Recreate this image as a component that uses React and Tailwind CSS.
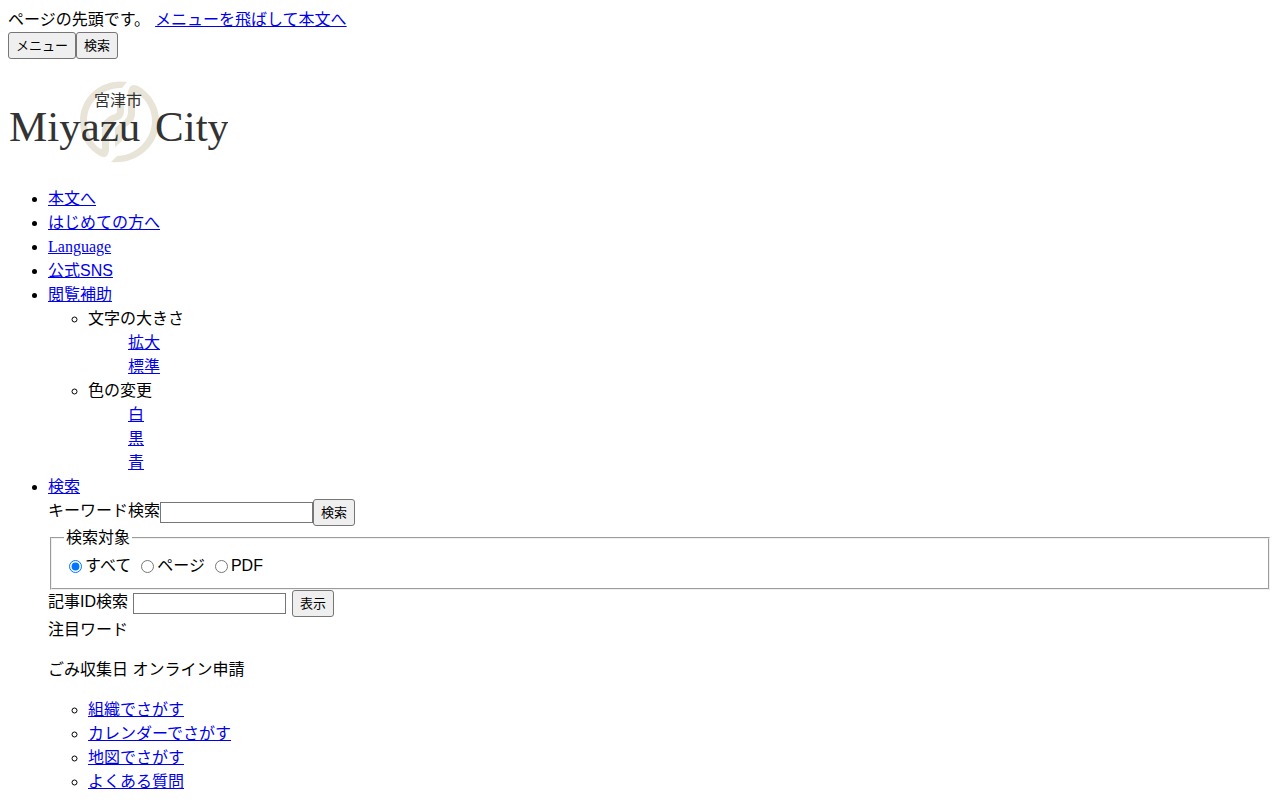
// src/App.jsx
import React, { useState } from 'react';

const TOOL_LINKS = ['本文へ', 'はじめての方へ', 'Language', '公式SNS'];

const ASSIST_GROUPS = [
  { title: '文字の大きさ', options: ['拡大', '標準'] },
  { title: '色の変更', options: ['白', '黒', '青'] },
];

const SEARCH_TARGETS = ['すべて', 'ページ', 'PDF'];

const FIND_LINKS = ['組織でさがす', 'カレンダーでさがす', '地図でさがす', 'よくある質問'];

const TextLink = ({ children }) => (
  <a
    href="#"
    className={
      children === 'Language'
        ? "text-[#0000ee] underline font-['Liberation_Serif',serif]"
        : 'text-[#0000ee] underline'
    }
  >
    {children}
  </a>
);

const Button = ({ children, type = 'button' }) => (
  <button
    type={type}
    className="h-[27px] px-[7px] text-[13px] leading-5 text-black bg-[#efefef] border border-[#767676] rounded-[3px]"
  >
    {children}
  </button>
);

const Logo = () => (
  <svg width="220" height="100" viewBox="0 0 220 100" role="img" aria-label="宮津市 Miyazu City">
    <g fill="#e8e4d8">
      <path d="M119 11 C95 7 72 25 72 50 C72 67 80 78 92 85 Q100 89 101 79 V58 Q101 52 107 50 Q116 48 116 41 V29 H109 V40 Q109 43 104 44 Q94 48 94 58 V77 Q94 79 91 77 C83 71 79 61 79 50 C79 30 96 16 114 17 Z" />
      <path d="M103 91 C128 94 151 75 151 50 C151 34 142 22 130 15 Q121 11 120 22 V42 Q120 47 114 51 L107 57 V76 L114 70 V59 L123 52 Q127 48 127 43 V24 Q127 21 130 23 C139 29 144 39 144 50 C144 69 127 85 109 85 Z" />
    </g>
    <g fill="#333333">
      <text x="86" y="35" className="text-[16px] font-['Noto_Sans_CJK_JP',sans-serif]">宮津市</text>
      <text x="1" y="70" className="text-[43px] font-['Liberation_Serif',serif]">Miyazu</text>
      <text x="147" y="70" className="text-[43px] font-['Liberation_Serif',serif]">City</text>
    </g>
  </svg>
);

const SearchPanel = () => {
  const [keyword, setKeyword] = useState('');
  const [articleId, setArticleId] = useState('');
  const [target, setTarget] = useState('すべて');

  return (
    <div>
      <form className="flex items-start" onSubmit={(e) => e.preventDefault()}>
        <label htmlFor="keyword">キーワード検索</label>
        <input
          id="keyword"
          type="text"
          value={keyword}
          onChange={(e) => setKeyword(e.target.value)}
          className="w-[153px] h-[21px] mt-[3px] px-0.5 text-[13px] bg-white border border-[#767676]"
        />
        <Button type="submit">検索</Button>
      </form>

      <fieldset className="mx-0.5 px-3 pb-[10px] border-2 [border-style:groove] border-[#f0f0f0]">
        <legend className="px-0.5">検索対象</legend>
        <div className="flex gap-[10px] pt-1 pl-[5px]">
          {SEARCH_TARGETS.map((name) => (
            <label key={name} className="flex items-center gap-[3px]">
              <input
                type="radio"
                name="target"
                checked={target === name}
                onChange={() => setTarget(name)}
                className="w-[13px] h-[13px]"
              />
              {name}
            </label>
          ))}
        </div>
      </fieldset>

      <form className="flex items-start pb-px" onSubmit={(e) => e.preventDefault()}>
        <label htmlFor="article-id" className="mr-[5px]">記事ID検索</label>
        <input
          id="article-id"
          type="text"
          value={articleId}
          onChange={(e) => setArticleId(e.target.value)}
          className="w-[153px] h-[21px] mt-[3px] mr-1.5 px-0.5 text-[13px] bg-white border border-[#767676]"
        />
        <Button type="submit">表示</Button>
      </form>

      <p>注目ワード</p>
      <p className="my-4">ごみ収集日 オンライン申請</p>

      <ul className="pl-10 list-[circle]">
        {FIND_LINKS.map((name) => (
          <li key={name}><TextLink>{name}</TextLink></li>
        ))}
      </ul>
    </div>
  );
};

const App = () => {
  return (
    <div className="p-2 bg-white text-black text-[16px] leading-6 font-['Liberation_Sans','Noto_Sans_CJK_JP',sans-serif]">
      {/* Skip link */}
      <p className="flex gap-[5px]">
        <span>ページの先頭です。</span>
        <TextLink>メニューを飛ばして本文へ</TextLink>
      </p>
      <div className="flex">
        <Button>メニュー</Button>
        <Button>検索</Button>
      </div>

      {/* Header */}
      <h1 className="pt-3 pb-4">
        <a href="#" className="inline-block align-top">
          <Logo />
        </a>
      </h1>

      <ul className="pl-10 list-disc">
        {TOOL_LINKS.map((name) => (
          <li key={name}><TextLink>{name}</TextLink></li>
        ))}
        <li>
          <TextLink>閲覧補助</TextLink>
          <ul className="pl-10 list-[circle]">
            {ASSIST_GROUPS.map((group) => (
              <li key={group.title}>
                {group.title}
                <ul className="pl-10 list-none">
                  {group.options.map((option) => (
                    <li key={option}><TextLink>{option}</TextLink></li>
                  ))}
                </ul>
              </li>
            ))}
          </ul>
        </li>
        <li>
          <TextLink>検索</TextLink>
          <SearchPanel />
        </li>
      </ul>
    </div>
  );
};

export default App;
